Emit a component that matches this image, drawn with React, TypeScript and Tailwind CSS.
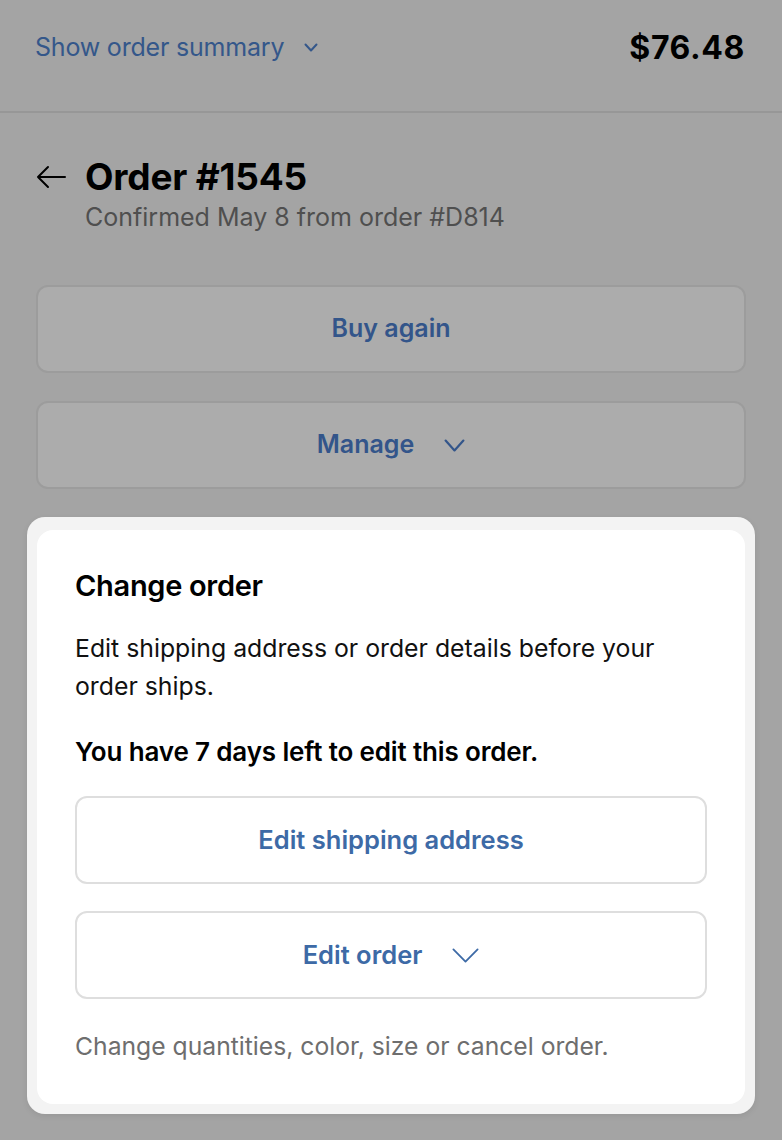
import React from "react";

function Chevron({ w, h, stroke, color }: { w: number; h: number; stroke: number; color: string }) {
  return (
    <svg width={w} height={h} viewBox={`0 0 ${w} ${h}`} fill="none">
      <path
        d={`M${stroke / 2 + 0.5} ${stroke / 2 + 0.5} L${w / 2} ${h - stroke / 2 - 0.5} L${w - stroke / 2 - 0.5} ${stroke / 2 + 0.5}`}
        stroke={color}
        strokeWidth={stroke}
        strokeLinecap="round"
        strokeLinejoin="round"
      />
    </svg>
  );
}

export default function App() {
  return (
    <div
      className="min-h-[1140px] w-full bg-[#a4a4a4] text-black"
      style={{ fontFamily: "Inter, 'Liberation Sans', Arial, sans-serif" }}
    >
      {/* Header */}
      <div className="flex h-[113px] items-center justify-between border-b-2 border-[#979797] pl-[35px] pr-[37px] pb-[16px]">
        <div className="flex items-center gap-[20px] text-[25px] tracking-[-0.2px] text-[#34578a]">
          <span>Show order summary</span>
          <Chevron w={14} h={9} stroke={2} color="#34578a" />
        </div>
        <div className="text-[32px] font-bold tracking-[0.6px]">$76.48</div>
      </div>

      {/* Title */}
      <div className="px-[36px] pt-[42px]">
        <div className="flex items-center gap-[19px]">
          <svg width="30" height="24" viewBox="0 0 30 24" fill="none">
            <path d="M29 12H2M12 2L2 12L12 22" stroke="#000" strokeWidth="2" strokeLinecap="round" strokeLinejoin="round" />
          </svg>
          <h1 className="text-[37px] font-bold leading-[44px] tracking-[-0.2px]">Order #1545</h1>
        </div>
        <p className="pl-[49px] text-[25px] leading-[36px] tracking-[0px] text-[#4f4f4f]">
          Confirmed May 8 from order #D814
        </p>

        {/* Buttons */}
        <div className="mt-[50px] flex flex-col gap-[28px]">
          <button className="flex h-[88px] w-full items-center justify-center rounded-[12px] border-2 border-[#9c9c9c] bg-[#acacac] text-[25px] font-semibold text-[#33558a]">
            Buy again
          </button>
          <button className="flex h-[88px] w-full items-center justify-center gap-[30px] rounded-[12px] border-2 border-[#9c9c9c] bg-[#acacac] text-[25px] font-semibold text-[#33558a]">
            <span>Manage</span>
            <Chevron w={21} h={13} stroke={2.2} color="#33558a" />
          </button>
        </div>
      </div>

      {/* Popover card */}
      <div className="mx-[27px] mt-[28px] rounded-[18px] bg-[#f3f3f3] px-[10px] pb-[10px] pt-[13px] shadow-[0_2px_6px_rgba(0,0,0,0.08)]">
        <div className="rounded-[16px] bg-white px-[38px] pb-[40px] pt-[38px]">
          <h2 className="text-[29px] font-semibold leading-[36px] tracking-[-0.3px]">Change order</h2>
          <p className="mt-[25px] text-[24.8px] leading-[38px] tracking-[0px] text-[#111]">
            Edit shipping address or order details before your order ships.
          </p>
          <p className="mt-[29px] text-[26px] font-semibold leading-[36px] tracking-[-0.15px]">
            You have 7 days left to edit this order.
          </p>
          <div className="mt-[26px] flex flex-col gap-[27px]">
            <button className="flex h-[88px] w-full items-center justify-center rounded-[12px] border-2 border-[#dedede] bg-white text-[25.5px] font-semibold text-[#3d6aa6]">
              Edit shipping address
            </button>
            <button className="flex h-[88px] w-full items-center justify-center gap-[30px] rounded-[12px] border-2 border-[#dedede] bg-white text-[25.5px] font-semibold text-[#3d6aa6]">
              <span>Edit order</span>
              <Chevron w={27} h={15} stroke={1.8} color="#3d6aa6" />
            </button>
          </div>
          <p className="mt-[29px] text-[24.7px] leading-[36px] tracking-[0px] text-[#6e6e6e]">
            Change quantities, color, size or cancel order.
          </p>
        </div>
      </div>
    </div>
  );
}
